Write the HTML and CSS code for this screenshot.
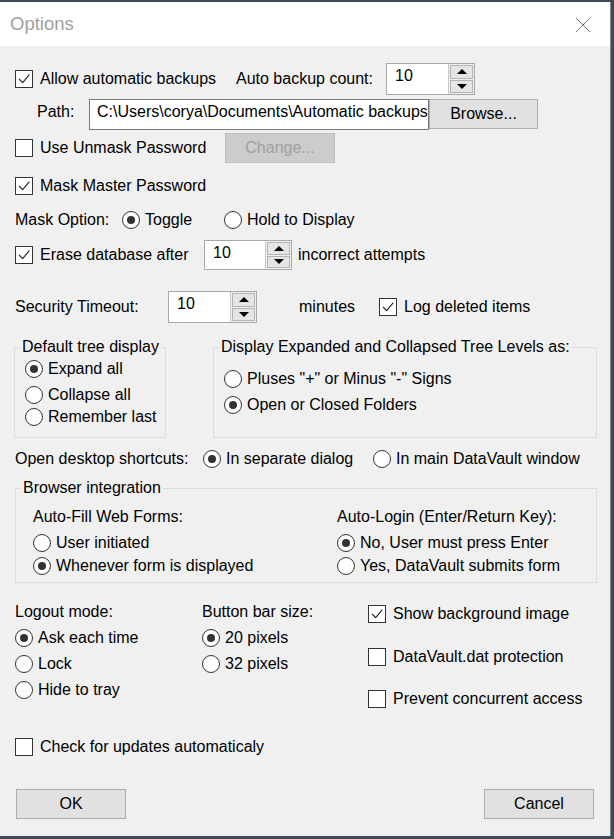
FILE: index.html
```html
<!DOCTYPE html>
<html lang="en">
<head>
  <meta charset="UTF-8">
  <title>Options</title>
  <link rel="stylesheet" href="styles.css">
</head>
<body>
  <div class="window">
    <div class="titlebar">
      <span class="title">Options</span>
      <svg class="close" width="16" height="16" viewBox="0 0 16 16"><path d="M1 1 L15 15 M15 1 L1 15" stroke="#7a7a7a" stroke-width="1" fill="none"/></svg>
    </div>

    <div class="content">
      <div class="row r1">
        <label class="check" style="width:221px"><span class="box on"><svg viewBox="0 0 18 18"><path d="M3.5 9 L7.5 13 L15 4"/></svg></span>Allow automatic backups</label>
        <span class="cell" style="width:150px">Auto backup count:</span>
        <div class="spin"><span class="val">10</span><div class="arrows"><span class="btn"><i class="up"></i></span><span class="btn"><i class="down"></i></span></div></div>
      </div>

      <div class="row r2">
        <span class="cell path-label">Path:</span>
        <div class="textbox">C:\Users\corya\Documents\Automatic backups</div>
        <button class="button browse">Browse...</button>
      </div>

      <div class="row r3">
        <label class="check" style="width:210px"><span class="box"></span>Use Unmask Password</label>
        <button class="button disabled">Change...</button>
      </div>

      <div class="row r4">
        <label class="check"><span class="box on"><svg viewBox="0 0 18 18"><path d="M3.5 9 L7.5 13 L15 4"/></svg></span>Mask Master Password</label>
      </div>

      <div class="row r5">
        <span class="cell" style="width:107px">Mask Option:</span>
        <label class="radio" style="width:102px"><span class="dot on"></span>Toggle</label>
        <label class="radio"><span class="dot"></span>Hold to Display</label>
      </div>

      <div class="row r6">
        <label class="check" style="width:189px"><span class="box on"><svg viewBox="0 0 18 18"><path d="M3.5 9 L7.5 13 L15 4"/></svg></span>Erase database after</label>
        <div class="spin short"><span class="val">10</span><div class="arrows"><span class="btn"><i class="up"></i></span><span class="btn"><i class="down"></i></span></div></div>
        <span class="cell after-spin">incorrect attempts</span>
      </div>

      <div class="row r7">
        <span class="cell" style="width:153px">Security Timeout:</span>
        <div class="spin"><span class="val">10</span><div class="arrows"><span class="btn"><i class="up"></i></span><span class="btn"><i class="down"></i></span></div></div>
        <span class="cell minutes">minutes</span>
        <label class="check"><span class="box on"><svg viewBox="0 0 18 18"><path d="M3.5 9 L7.5 13 L15 4"/></svg></span>Log deleted items</label>
      </div>

      <div class="groups">
        <fieldset class="group tree">
          <legend>Default tree display</legend>
          <label class="radio g1a"><span class="dot on"></span>Expand all</label>
          <label class="radio g1b"><span class="dot"></span>Collapse all</label>
          <label class="radio g1c"><span class="dot"></span>Remember last</label>
        </fieldset>
        <fieldset class="group levels">
          <legend>Display Expanded and Collapsed Tree Levels as:</legend>
          <label class="radio g2a"><span class="dot"></span>Pluses "+" or Minus "-" Signs</label>
          <label class="radio g2b"><span class="dot on"></span>Open or Closed Folders</label>
        </fieldset>
      </div>

      <div class="row shortcuts">
        <span class="cell" style="width:188px">Open desktop shortcuts:</span>
        <label class="radio" style="width:170px"><span class="dot on"></span>In separate dialog</label>
        <label class="radio"><span class="dot"></span>In main DataVault window</label>
      </div>

      <fieldset class="group browser">
        <legend>Browser integration</legend>
        <div class="cols">
          <div class="col autofill">
            <span class="line head">Auto-Fill Web Forms:</span>
            <label class="radio r-a"><span class="dot"></span>User initiated</label>
            <label class="radio r-b"><span class="dot on"></span>Whenever form is displayed</label>
          </div>
          <div class="col">
            <span class="line head">Auto-Login (Enter/Return Key):</span>
            <label class="radio r-a"><span class="dot on"></span>No, User must press Enter</label>
            <label class="radio r-b"><span class="dot"></span>Yes, DataVault submits form</label>
          </div>
        </div>
      </fieldset>

      <div class="bottom">
        <div class="col logout">
          <span class="line">Logout mode:</span>
          <label class="radio step"><span class="dot on"></span>Ask each time</label>
          <label class="radio step"><span class="dot"></span>Lock</label>
          <label class="radio step"><span class="dot"></span>Hide to tray</label>
        </div>
        <div class="col barsize">
          <span class="line">Button bar size:</span>
          <label class="radio step"><span class="dot on"></span>20 pixels</label>
          <label class="radio step"><span class="dot"></span>32 pixels</label>
        </div>
        <div class="col flags">
          <label class="check c-a"><span class="box on"><svg viewBox="0 0 18 18"><path d="M3.5 9 L7.5 13 L15 4"/></svg></span>Show background image</label>
          <label class="check c-b"><span class="box"></span>DataVault.dat protection</label>
          <label class="check c-c"><span class="box"></span>Prevent concurrent access</label>
        </div>
      </div>

      <div class="row updates">
        <label class="check"><span class="box"></span>Check for updates automaticaly</label>
      </div>

      <div class="actions">
        <button class="button action">OK</button>
        <button class="button action">Cancel</button>
      </div>
    </div>
  </div>
</body>
</html>
```

FILE: styles.css
```css
html, body { margin: 0; height: 100%; }
body { background: #3e4a58; font-family: "Liberation Sans", Arial, sans-serif; font-size: 16px; color: #000; overflow: hidden; }

.window { width: 610px; height: 834px; margin-top: 2px; background: #f0f0f0; border-right: 1px solid #8a8a8a; }
.titlebar { height: 44px; background: #fff; display: flex; align-items: center; justify-content: space-between; padding: 0 19px 0 10px; }
.title { font-size: 18.5px; color: #a0a0a0; }
.close { width: 16px; height: 16px; margin-top: 1px; }

.content { padding: 0 0 0 15px; }
.row { display: flex; align-items: center; }
.cell { display: block; white-space: nowrap; }
.line { display: flex; align-items: center; height: 22px; white-space: nowrap; }

/* checkboxes and radios */
.check, .radio { display: flex; align-items: center; height: 22px; white-space: nowrap; }
.check .box { width: 18px; height: 18px; box-sizing: border-box; border: 1px solid #333; background: #fff; margin-right: 7px; flex: none; }
.check .box svg { display: block; width: 16px; height: 16px; }
.check .box svg path { fill: none; stroke: #262626; stroke-width: 1.3; }
.radio .dot { width: 18px; height: 18px; box-sizing: border-box; border: 1px solid #333; border-radius: 50%; background: #fff; margin-right: 5px; flex: none; display: flex; align-items: center; justify-content: center; }
.radio .dot.on::after { content: ""; width: 8px; height: 8px; border-radius: 50%; background: #333; }

/* spin boxes */
.spin { width: 89px; height: 32px; box-sizing: border-box; border: 1px solid #a8a8a8; background: #fff; display: flex; flex: none; }
.spin.short { width: 88px; height: 30px; }
.spin .val { flex: 1; border-right: 1px solid #c8c8c8; padding: 3px 0 0 8px; line-height: 18px; }
.spin .arrows { width: 23px; display: flex; flex-direction: column; gap: 1px; padding: 1px; background: #f0f0f0; }
.spin .btn { flex: 1; background: #e5e5e5; border: 1px solid #b4b4b4; display: flex; align-items: center; justify-content: center; }
.spin .btn i { width: 0; height: 0; border-left: 5px solid transparent; border-right: 5px solid transparent; }
.spin .btn i.up { border-bottom: 5px solid #000; }
.spin .btn i.down { border-top: 5px solid #000; }

/* buttons and text box */
.button { font: inherit; height: 30px; box-sizing: border-box; background: #e1e1e1; border: 1px solid #adadad; padding: 0; color: #000; }
.button.disabled { width: 110px; background: #cccccc; border-color: #bfbfbf; color: #a0a0a0; }
.button.browse { width: 109px; height: 30px; align-self: flex-start; }
.button.action { width: 110px; }
.textbox { width: 340px; height: 31px; box-sizing: border-box; border: 1px solid #7a7a7a; background: #fff; padding: 2px 0 0 7px; white-space: nowrap; overflow: hidden; line-height: 20px; }

.r1 { margin-top: 17px; height: 32px; }
.r2 { margin-top: 4px; height: 31px; align-items: flex-start; }
.path-label { width: 52px; padding: 4px 0 0 22px; }
.r3 { margin-top: 3px; height: 30px; }
.r4 { margin-top: 11px; height: 24px; }
.r5 { margin-top: 10px; height: 24px; }
.r6 { margin-top: 8px; height: 30px; }
.after-spin { margin-left: 6px; }
.r7 { margin-top: 21px; height: 32px; }
.minutes { width: 80px; margin-left: 42px; }

/* group boxes */
.group { margin: 0; padding: 0; border: 1px solid #dcdcdc; min-width: 0; box-sizing: border-box; }
.group legend { padding: 0 2px; margin-left: 5px; line-height: 18px; white-space: nowrap; }
.groups { display: flex; gap: 47px; margin: 15px 0 0 -1px; }
.tree { width: 152px; height: 100px; padding-left: 10px; }
.levels { width: 384px; height: 100px; padding-left: 10px; }
.tree legend, .levels legend { margin-left: -5px; }
.g1a { margin-top: 2px; }
.g1b { margin-top: 4px; }
.g1c { margin-top: 0; }
.g2a { margin-top: 12px; }
.g2b { margin-top: 4px; }

.shortcuts { margin-top: 9px; height: 24px; }

.browser { width: 582px; height: 104px; margin-top: 8px; }
.browser .cols { display: flex; padding-left: 17px; margin-top: 9px; }
.browser .autofill { width: 304px; }
.r-a { margin-top: 4px; }
.r-b { margin-top: 1px; }

.bottom { display: flex; margin-top: 18px; height: 109px; }
.logout { width: 187px; }
.barsize { width: 166px; }
.step { margin-top: 4px; }
.c-a { margin-top: 2px; }
.c-b { margin-top: 21px; }
.c-c { margin-top: 20px; }

.updates { margin-top: 26px; height: 22px; }

.actions { display: flex; justify-content: space-between; margin: 31px 16px 0 1px; }
```
